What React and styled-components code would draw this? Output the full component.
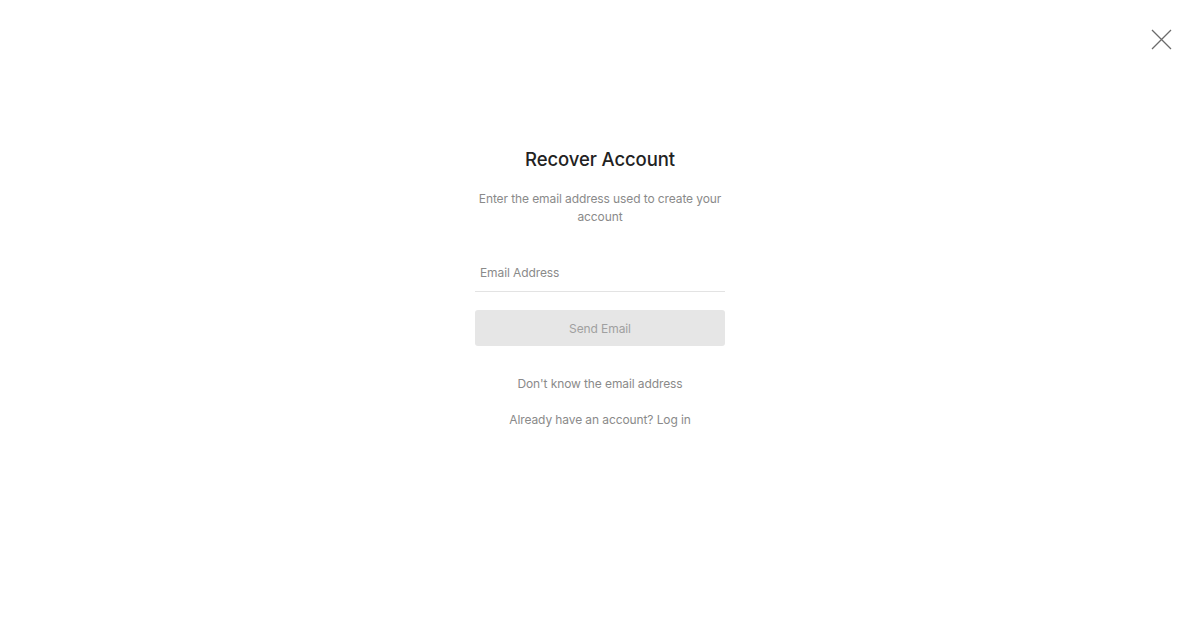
import React, { useState } from "react";
import styled, { createGlobalStyle } from "styled-components";

const GlobalStyle = createGlobalStyle`
  html, body {
    margin: 0;
    padding: 0;
    background: #ffffff;
    font-family: Inter, "Noto Sans", sans-serif;
  }
  * {
    box-sizing: border-box;
  }
`;

const Page = styled.div`
  position: relative;
  width: 100%;
  height: 643px;
  display: flex;
  justify-content: center;
  padding-top: 145px;
`;

const CloseButton = styled.button`
  position: absolute;
  top: 27px;
  right: 27px;
  width: 24px;
  height: 24px;
  padding: 0;
  border: none;
  background: transparent;
  cursor: pointer;
  display: flex;
  align-items: center;
  justify-content: center;
`;

const Form = styled.form`
  width: 250px;
  display: flex;
  flex-direction: column;
  align-items: center;
  text-align: center;
`;

const Title = styled.h1`
  margin: 0;
  font-size: 18.5px;
  line-height: 28px;
  font-weight: 500;
  color: #222222;
  letter-spacing: -0.1px;
`;

const Subtitle = styled.p`
  margin: 17px 0 0;
  font-size: 12px;
  line-height: 18px;
  letter-spacing: -0.1px;
  color: #8a8a8a;
`;

const Field = styled.input`
  margin-top: 31px;
  width: 100%;
  height: 35px;
  padding: 0 5px 3px;
  border: none;
  border-bottom: 1px solid #e3e3e3;
  font-family: inherit;
  font-size: 12px;
  letter-spacing: -0.1px;
  color: #333333;
  outline: none;
  background: transparent;

  &::placeholder {
    color: #8a8a8a;
  }
`;

const SubmitButton = styled.button`
  margin-top: 18px;
  width: 100%;
  height: 36px;
  border: none;
  border-radius: 3px;
  background: #e6e6e6;
  color: #a0a0a0;
  font-family: inherit;
  font-size: 12px;
  letter-spacing: -0.1px;
  cursor: default;
`;

const TextLink = styled.a`
  margin-top: ${(p) => p.$gap}px;
  font-size: 12px;
  line-height: 18px;
  letter-spacing: -0.1px;
  color: #8a8a8a;
  text-decoration: none;
  cursor: pointer;
`;

const App = () => {
  const [email, setEmail] = useState("");

  return (
    <>
      <GlobalStyle />
      <Page>
        <CloseButton aria-label="Close">
          <svg width="21" height="21" viewBox="0 0 21 21">
            <path
              d="M1 1 L20 20 M20 1 L1 20"
              stroke="#6b6b6b"
              strokeWidth="1.3"
              fill="none"
            />
          </svg>
        </CloseButton>
        <Form onSubmit={(e) => e.preventDefault()}>
          <Title>Recover Account</Title>
          <Subtitle>Enter the email address used to create your account</Subtitle>
          <Field
            type="email"
            placeholder="Email Address"
            value={email}
            onChange={(e) => setEmail(e.target.value)}
          />
          <SubmitButton type="submit" disabled={!email}>
            Send Email
          </SubmitButton>
          <TextLink $gap={29}>Don't know the email address</TextLink>
          <TextLink $gap={18}>Already have an account? Log in</TextLink>
        </Form>
      </Page>
    </>
  );
};

export default App;
